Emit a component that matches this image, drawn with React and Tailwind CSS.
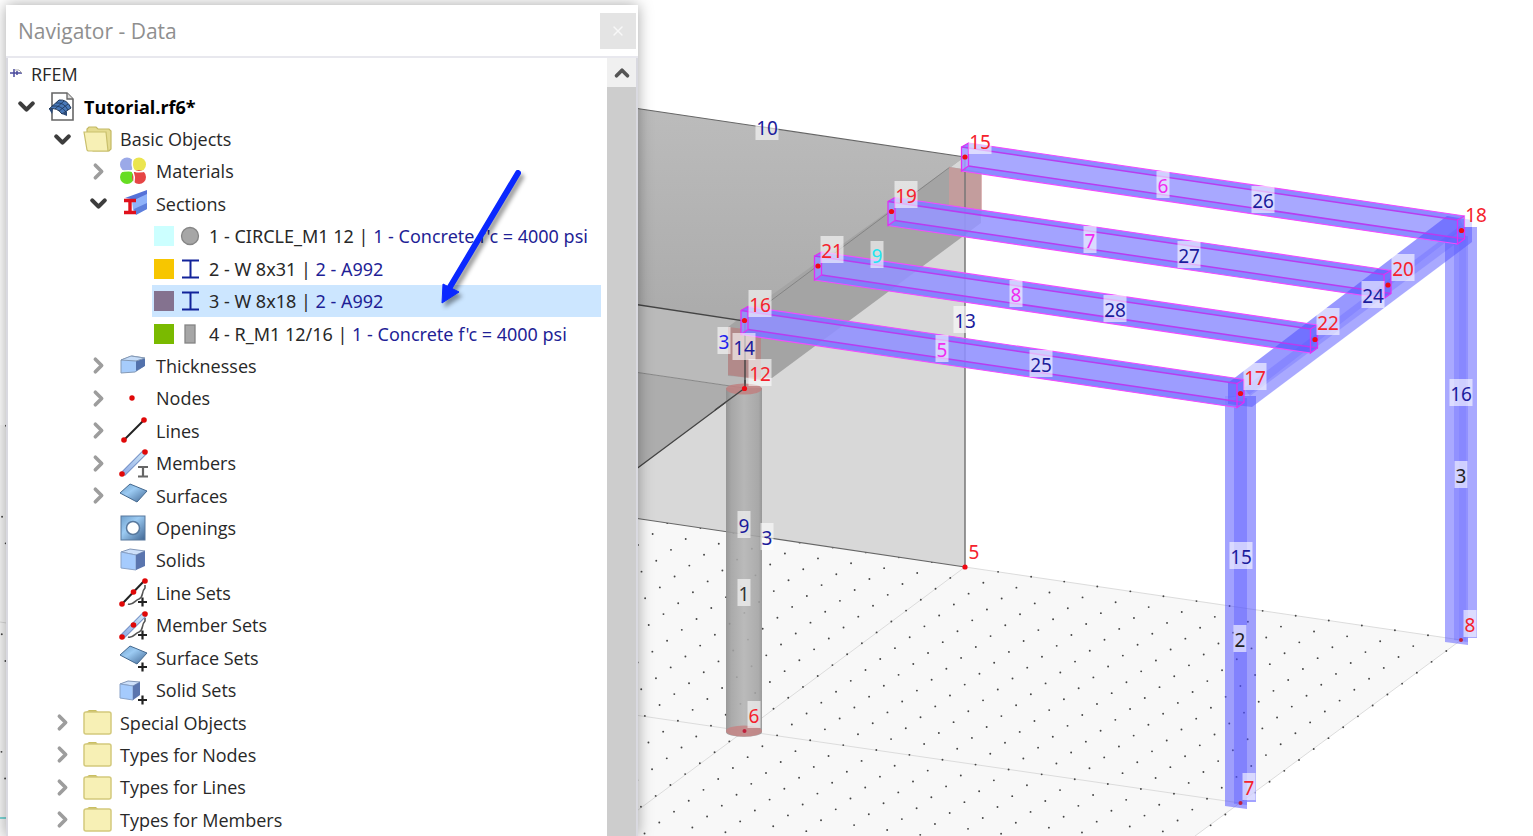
import { useState } from 'react';
import { ChevronDown, ChevronRight, ChevronUp, X } from 'lucide-react';

const treeTop = [
    { name: 'Basic Objects', level: 2, icon: 'folderOpen', open: true },
    { name: 'Materials', level: 3, icon: 'materials', open: false },
    { name: 'Sections', level: 3, icon: 'sections', open: true },
];

const sections = [
    { id: 1, name: 'CIRCLE_M1 12', material: "1 - Concrete f'c = 4000 psi", swatch: 'bg-[#ccffff]', shape: 'circle' },
    { id: 2, name: 'W 8x31', material: '2 - A992', swatch: 'bg-[#f7c600]', shape: 'beam' },
    { id: 3, name: 'W 8x18', material: '2 - A992', swatch: 'bg-[#84728f]', shape: 'beam' },
    { id: 4, name: 'R_M1 12/16', material: "1 - Concrete f'c = 4000 psi", swatch: 'bg-[#7aba00]', shape: 'rect' },
];

const treeBottom = [
    { name: 'Thicknesses', level: 3, icon: 'thickness', open: false },
    { name: 'Nodes', level: 3, icon: 'node', open: false },
    { name: 'Lines', level: 3, icon: 'line', open: false },
    { name: 'Members', level: 3, icon: 'member', open: false },
    { name: 'Surfaces', level: 3, icon: 'surface', open: false },
    { name: 'Openings', level: 3, icon: 'opening' },
    { name: 'Solids', level: 3, icon: 'solid' },
    { name: 'Line Sets', level: 3, icon: 'lineSet' },
    { name: 'Member Sets', level: 3, icon: 'memberSet' },
    { name: 'Surface Sets', level: 3, icon: 'surfaceSet' },
    { name: 'Solid Sets', level: 3, icon: 'solidSet' },
    { name: 'Special Objects', level: 2, icon: 'folder', open: false },
    { name: 'Types for Nodes', level: 2, icon: 'folder', open: false },
    { name: 'Types for Lines', level: 2, icon: 'folder', open: false },
    { name: 'Types for Members', level: 2, icon: 'folder', open: false },
];

const indent = { 1: 'pl-0', 2: 'pl-9', 3: 'pl-18' };

const plus = <path d="M19 24h9M23.5 19.5v9" stroke="#222" strokeWidth="2.2" />;
const curve = <path d="M9 26c5 2 7-4 11-5 5-2 2-7 6-11v-3" stroke="#555" strokeWidth="1.6" fill="none" />;
const surfaceShape = <path d="M1 12 11 3l17 7-10 11z" fill="url(#steel)" stroke="#44698f" strokeWidth="1" />;

const icons = {
    folder: (
        <>
            <path d="M3 6V4l3-2h7l2 2v3H3z" fill="#c9bf62" />
            <rect x="1" y="4" width="27" height="22" rx="2" fill="#f7f0b5" stroke="#d3c97c" strokeWidth="1.5" />
        </>
    ),
    folderOpen: (
        <>
            <path d="M4 7V4l2-2h7l2 2h11l2 2v18l-2 2H10z" fill="#e5dc90" stroke="#c4b964" strokeWidth="1.2" />
            <path d="M1 7h22l2 19H5L4 25z" fill="#f7f0b5" stroke="#c9bf6c" strokeWidth="1.2" />
        </>
    ),
    materials: (
        <>
            <circle cx="8" cy="7.5" r="7" fill="#9ba9e8" />
            <circle cx="20" cy="7.5" r="7" fill="#ebe54f" />
            <circle cx="8" cy="20" r="7" fill="#66dd22" />
            <circle cx="20" cy="20" r="7" fill="#e64545" />
            <path d="M14.5 0q-3 9 1 14 5 2 13-1M14 28q3-9-1-14-5-1-13 1" stroke="#fff" strokeWidth="1.5" fill="none" />
        </>
    ),
    sections: (
        <>
            <path d="M6 9 28 1v5L18 11z" fill="#5572d8" />
            <path d="M13 12 28 5v15L17 25l-3-4z" fill="#8fb2fa" />
            <path d="m15 20 13-6v6l-11 6z" fill="#5e7fdc" />
            <path d="M5 11.5h12M5 23.5h12M11 11v12" stroke="#e0101c" strokeWidth="3.4" />
        </>
    ),
    thickness: (
        <>
            <path d="M2 9 13 5l12 2v8l-9 6-14 1z" fill="#a6ccfb" stroke="#8499b5" strokeWidth="1" />
            <path d="m17 10 9-3v8l-9 5z" fill="#5372ac" />
            <path d="m2 9 10-4 14 2-9 3z" fill="#c5dcf8" stroke="#8499b5" strokeWidth="1" />
        </>
    ),
    node: <circle cx="13" cy="14" r="2.7" fill="#e00808" />,
    line: (
        <>
            <path d="M5 24 25 4" stroke="#222" strokeWidth="2" />
            <circle cx="5" cy="24" r="2.8" fill="#e00808" />
            <circle cx="25" cy="4" r="2.8" fill="#e00808" />
        </>
    ),
    member: (
        <>
            <path d="M4 25 26 3" stroke="#7793c7" strokeWidth="5.5" />
            <path d="M4 25 26 3" stroke="url(#steelLight)" strokeWidth="3.5" />
            <circle cx="3" cy="25" r="2.8" fill="#e00808" />
            <circle cx="26" cy="3" r="2.8" fill="#e00808" />
            <path d="M19 18h10M19 27.5h10M24 18v9" stroke="#666" strokeWidth="2.2" />
        </>
    ),
    surface: surfaceShape,
    opening: (
        <>
            <rect x="2" y="2" width="24" height="24" fill="url(#steel)" stroke="#58789d" strokeWidth="1" />
            <circle cx="14" cy="14" r="6.5" fill="#fff" stroke="#58789d" strokeWidth="1.5" />
        </>
    ),
    solid: (
        <>
            <path d="m2 6 9-3 15 2-9 4z" fill="#cde0fa" stroke="#8297b8" strokeWidth="1" />
            <path d="M2 6 17 9v15L2 22z" fill="#a5cbfd" stroke="#8aa3c8" strokeWidth="1" />
            <path d="m17 9 9-4v15l-9 4z" fill="#5a75ae" />
        </>
    ),
    lineSet: (
        <>
            {curve}
            <path d="M3 26 26 2" stroke="#222" strokeWidth="2" />
            <circle cx="3" cy="26" r="2.8" fill="#e00808" />
            <circle cx="14.5" cy="14" r="2.8" fill="#e00808" />
            <circle cx="26" cy="3" r="2.8" fill="#e00808" />
            {plus}
        </>
    ),
    memberSet: (
        <>
            {curve}
            <path d="M3 26 26 3" stroke="#7793c7" strokeWidth="5.5" />
            <path d="M3 26 26 3" stroke="url(#steelLight)" strokeWidth="3.5" />
            <circle cx="3" cy="26" r="2.8" fill="#e00808" />
            <circle cx="14.5" cy="14" r="2.8" fill="#e00808" />
            <circle cx="26" cy="3" r="2.8" fill="#e00808" />
            {plus}
        </>
    ),
    surfaceSet: (
        <>
            {surfaceShape}
            {plus}
        </>
    ),
    solidSet: (
        <>
            <path d="m1 8 8-3 12 1-7 4z" fill="#cde0fa" stroke="#8297b8" strokeWidth="1" />
            <path d="M1 8 14 10v14L1 22z" fill="#a5cbfd" stroke="#8aa3c8" strokeWidth="1" />
            <path d="m14 10 7-4v13l-7 5z" fill="#5a75ae" />
            {plus}
        </>
    ),
    model: (
        <>
            <path d="M5 1h15l6 6v21H5z" fill="#fff" stroke="#666" strokeWidth="1.6" />
            <path d="M20 1v6h6" fill="#ddd" stroke="#666" strokeWidth="1.3" />
            <path d="M2 17 12 8q8-1 12 8l-9 6q-5-7-13-5z" fill="#4777b8" stroke="#1d3557" strokeWidth="1" />
            <path d="M5 14q9-1 14 6M9 11q8-1 12 7M8 17l9-8M12 19l9-7" stroke="#1d3557" strokeWidth="0.8" fill="none" />
            <path d="m2 17 4 0-1 5zM15 22l5-3v5z" fill="#2b4a78" />
        </>
    ),
};

function Icon({ name }) {
    return (
        <svg viewBox="0 0 29 29" className="h-[29px] w-[29px] overflow-visible" aria-hidden="true">
            {icons[name]}
        </svg>
    );
}

function Toggle({ name, open }) {
    if (open === undefined) {
        return <span className="w-9 shrink-0" />;
    }
    return (
        <button type="button" aria-label={`Toggle ${name}`} aria-expanded={open} className="flex w-9 shrink-0 items-center justify-center">
            {open ? <ChevronDown size={25} strokeWidth={4} color="#3d3d3d" /> : <ChevronRight size={25} strokeWidth={3.5} color="#9d9d9d" />}
        </button>
    );
}

function TreeRow({ name, level, icon, open, bold }) {
    return (
        <li className={`flex items-center ${indent[level]}`}>
            <Toggle name={name} open={open} />
            <span className="flex w-[34px] shrink-0 items-center justify-center">
                <Icon name={icon} />
            </span>
            <span className={bold ? 'pl-[6px] font-bold text-black' : 'pl-[6px]'}>{name}</span>
        </li>
    );
}

function SectionShape({ shape }) {
    return (
        <svg viewBox="0 0 20 20" className="h-5 w-5" aria-hidden="true">
            {shape === 'circle' && <circle cx="10" cy="10" r="8.5" fill="#a6a6a6" stroke="#858585" strokeWidth="1.3" />}
            {shape === 'beam' && <path d="M2 1.5h17M2 18.5h17M10.5 2v16" stroke="#12239a" strokeWidth="2" />}
            {shape === 'rect' && <rect x="5" y="1" width="10" height="18" fill="#a6a6a6" stroke="#858585" strokeWidth="1.3" />}
        </svg>
    );
}

function Navigator() {
    const [selected, setSelected] = useState(3);

    return (
        <aside className="relative flex h-full w-[632px] flex-col bg-white shadow-[0_0_14px_rgba(0,0,0,0.35)]">
            <header className="flex h-[53px] shrink-0 items-center justify-between border-b-2 border-[#e8e8ee] pr-[2px] pl-3">
                <h1 className="pt-[2px] text-[21px] text-[#8f8f8f]">Navigator - Data</h1>
                <button type="button" aria-label="Close" className="flex h-9 w-9 items-center justify-center bg-[#e4e4e4]">
                    <X size={16} strokeWidth={2} color="#f8f8f8" />
                </button>
            </header>

            <div className="flex min-h-0 flex-1 border-x-2 border-[#d9d9e0]">
                <ul className="grid flex-1 auto-rows-fr pr-[6px] text-lg whitespace-nowrap text-[#282828]">
                    <li className="flex items-center gap-[7px]">
                        <svg viewBox="0 0 16 16" className="h-4 w-4" aria-hidden="true">
                            <path d="M2 7h12M6 3v8M9 5v4" stroke="#4a4a9c" strokeWidth="1.5" />
                            <path d="M7 4h4l3 3" stroke="#aaa" strokeWidth="1" fill="none" />
                        </svg>
                        <span>RFEM</span>
                    </li>
                    <TreeRow name="Tutorial.rf6*" level={1} icon="model" open bold />
                    {treeTop.map((row) => (
                        <TreeRow key={row.name} {...row} />
                    ))}
                    {sections.map((s) => (
                        <li key={s.id} className="flex pl-36">
                            <button
                                type="button"
                                onClick={() => setSelected(s.id)}
                                className={`flex flex-1 items-center pl-[2px] text-left font-['Noto_Sans',sans-serif] ${selected === s.id ? 'bg-[#cce6ff]' : ''}`}
                            >
                                <span className={`h-5 w-5 shrink-0 ${s.swatch}`} />
                                <span className="flex w-8 shrink-0 justify-center">
                                    <SectionShape shape={s.shape} />
                                </span>
                                <span className="pl-[3px]">
                                    {s.id} - {s.name} | <span className="text-[#1f1f96]">{s.material}</span>
                                </span>
                            </button>
                        </li>
                    ))}
                    {treeBottom.map((row) => (
                        <TreeRow key={row.name} {...row} />
                    ))}
                </ul>

                <div className="flex w-[29px] shrink-0 flex-col bg-[#cdcdcd]">
                    <button type="button" aria-label="Scroll up" className="flex h-[29px] items-center justify-center bg-[#f0f0f0]">
                        <ChevronUp size={22} strokeWidth={4} color="#555" />
                    </button>
                </div>
            </div>

            {/* callout arrow pointing at the selected section */}
            <svg viewBox="0 0 100 150" className="pointer-events-none absolute top-[158px] left-[424px] h-[150px] w-[100px] drop-shadow-[3px_4px_2px_rgba(0,0,0,0.4)]" aria-hidden="true">
                <path d="M88 10 20 124" stroke="#0a28ff" strokeWidth="6" strokeLinecap="round" />
                <path d="M12 140 13 121l16 8z" fill="#0a28ff" stroke="#0a28ff" strokeWidth="1" />
            </svg>
        </aside>
    );
}

// ground grid, i runs along line 5-8 and j along line 5-6
const gridDots = [];
for (let i = -30; i <= 15; i++) {
    for (let j = 0; j <= 40; j++) {
        const x = 965 + 33.07 * i - 14.73 * j;
        const y = 567 + 4.87 * i + 10.9 * j;
        if (x > 0 && y < 836) {
            gridDots.push([x, y]);
        }
    }
}

const purlins = [
    { x: 965, y: 157, fill: '#9c9cff' },
    { x: 891.5, y: 211.5, fill: '#9696ff' },
    { x: 818, y: 266, fill: '#9393ff' },
    { x: 744.5, y: 320.5, fill: '#9090ff' },
];

const red = '#f5222d';
const navy = '#1c1c9c';
const pink = '#f02cf0';

const labels = [
    ['10', 767, 128, navy],
    ['15', 980, 142, red],
    ['19', 906, 196, red],
    ['21', 832, 251, red],
    ['16', 760, 305, red],
    ['9', 877, 256, '#22e6f2'],
    ['3', 724, 342, '#2222ee'],
    ['14', 744, 348, navy],
    ['12', 760, 374, red],
    ['13', 965, 321, navy],
    ['6', 1163, 186, pink],
    ['7', 1090, 241, pink],
    ['8', 1016, 295, pink],
    ['5', 942, 350, pink],
    ['26', 1263, 201, navy],
    ['27', 1189, 256, navy],
    ['28', 1115, 310, navy],
    ['25', 1041, 365, navy],
    ['18', 1476, 215, red],
    ['20', 1403, 269, red],
    ['24', 1373, 296, navy],
    ['22', 1328, 323, red],
    ['17', 1255, 378, red],
    ['16', 1461, 394, navy],
    ['3', 1461, 476, '#222'],
    ['15', 1241, 557, navy],
    ['2', 1240, 640, '#222'],
    ['9', 744, 526, navy],
    ['3', 767, 538, navy],
    ['1', 744, 594, '#333'],
    ['5', 974, 552, red],
    ['6', 754, 716, red],
    ['7', 1249, 788, red],
    ['8', 1470, 625, red],
];

const nodes = [
    [965, 157], [891.5, 211.5], [818, 266], [744.5, 320.5], [744.5, 388.5],
    [1461.5, 230.5], [1388, 285], [1315, 339.5], [1240.5, 393.5], [965, 567],
];

const supports = [[744.5, 731], [1240.5, 803], [1461, 640]];

function PurlinLines({ x, y }) {
    return (
        <g transform={`translate(${x} ${y})`} fill="none">
            <path d="M-3.5-10 492.5 63M3.5 9 499.5 82" stroke="#b83cf0" strokeWidth="1.5" />
            <path d="M3.5-14 499.5 59M-3.5 14 492.5 87" stroke="#f04cff" strokeWidth="1.2" />
            <path d="M-3.5-10 3.5-14V9L-3.5 14zM492.5 63l7-4v23l-7 5z" stroke="#e030f4" strokeWidth="1.3" />
        </g>
    );
}

function ModelView() {
    return (
        <svg viewBox="0 0 1533 836" preserveAspectRatio="xMinYMin slice" className="absolute inset-0 h-full w-full font-['Noto_Sans',sans-serif]" role="img" aria-label="Structural model">
            <defs>
                <linearGradient id="steel" x1="0" y1="0" x2="1" y2="1">
                    <stop offset="0" stopColor="#6fa0cc" />
                    <stop offset="0.4" stopColor="#9ccbf3" />
                    <stop offset="1" stopColor="#3f6592" />
                </linearGradient>
                <linearGradient id="steelLight" gradientUnits="userSpaceOnUse" x1="3" y1="26" x2="26" y2="3">
                    <stop offset="0" stopColor="#8ea9e6" />
                    <stop offset="1" stopColor="#cfe8f6" />
                </linearGradient>
                <linearGradient id="slab" x1="0" y1="0" x2="0" y2="1">
                    <stop offset="0" stopColor="#bcbcbc" />
                    <stop offset="1" stopColor="#ababab" />
                </linearGradient>
                <linearGradient id="pipe" x1="0" y1="0" x2="1" y2="0">
                    <stop offset="0" stopColor="#8c8c8c" />
                    <stop offset="0.15" stopColor="#a0a0a0" />
                    <stop offset="0.5" stopColor="#b2b2b2" />
                    <stop offset="0.9" stopColor="#a2a2a2" />
                    <stop offset="1" stopColor="#8e8e8e" />
                </linearGradient>
            </defs>

            {/* ground */}
            <path d="M0 425 965 567 1461 640 1195 836H0z" fill="#f8f8f8" />
            <path d="M965 567 1461 640 1195 836M965 567 603 836M0 622 744 731 1240 803" stroke="#dcdcdc" strokeWidth="1" fill="none" />
            {gridDots.map(([x, y], k) => (
                <circle key={k} cx={x} cy={y} r="0.95" fill="#444" />
            ))}
            <path d="M0 818h8" stroke="#5cc" strokeWidth="1.5" />

            {/* walls and slab */}
            <path d="M600 461 744 388 745 321 965 157V567L600 513z" fill="#d8d8d8" />
            <path d="M600 103 965 157 745 321 600 299z" fill="url(#slab)" />
            <path d="M600 299 745 321V388L600 367z" fill="#bababa" />
            <path d="M600 367 744 388 600 496z" fill="#adadad" />

            {/* concrete beam 9 */}
            <path d="M728 327 744 315 950 167 981 172V223L772 378 728 376z" fill="#a4a4a4" />
            <path d="M745 320 950 167" stroke="#777" strokeWidth="1" opacity="0.7" />
            <path d="M949 167 982 172V214L949 209z" fill="#d09a9a" opacity="0.7" />
            <path d="M728 327 761 331V380L728 375z" fill="#b87f7f" opacity="0.7" />
            <path d="M965 157V567" stroke="#777" strokeWidth="1.5" />
            <path d="M600 103 965 157M600 513 965 567" stroke="#666" strokeWidth="1.2" />
            <path d="M600 299 745 321V388L600 496" stroke="#444" strokeWidth="1.4" fill="none" />
            <path d="M600 367 744 388" stroke="#888" strokeWidth="1" />

            {/* concrete column 1 */}
            <path d="M726 388V732a18 5 0 0 0 36 0V388z" fill="url(#pipe)" opacity="0.88" />
            <ellipse cx="744" cy="389" rx="18" ry="5.5" fill="#c08080" opacity="0.85" />
            <ellipse cx="744" cy="731" rx="18" ry="5.5" fill="#c48484" opacity="0.85" />
            <path d="M745 380V388L715 410" stroke="#444" strokeWidth="1.4" fill="none" />

            {/* steel columns */}
            <g fill="#4c4cff">
                <path d="M1225 396H1256V802H1247V809L1225 806z" opacity="0.52" />
                <path d="M1234 398H1247V805L1234 804z" opacity="0.34" />
                <path d="M1445 240 1463 227H1477V638H1468V645L1445 642z" opacity="0.48" />
                <path d="M1454 236H1468V642L1454 640z" opacity="0.26" />
                <path d="M1459 236H1466V642L1459 640z" opacity="0.12" />
            </g>

            {/* purlins and edge beam */}
            {purlins.map((p) => (
                <g key={p.y} transform={`translate(${p.x} ${p.y})`}>
                    <path d="M-3.5-10 3.5-14 499.5 59V82L492.5 87-3.5 14z" fill={p.fill} opacity="0.88" />
                    <path d="M-3.5-10 3.5-14 499.5 59 492.5 63zM-3.5 14 3.5 9 499.5 82 492.5 87z" fill="#5a5aff" opacity="0.35" />
                </g>
            ))}
            <g fill="#5454ff">
                <path d="M1228 383 1447 216 1472 220V242L1252 407 1228 404z" opacity="0.5" />
                <path d="M1228 383 1447 216 1460 219 1464 228 1250 394 1228 398z" opacity="0.2" />
                <path d="M1244 388 1460 226 1466 236 1250 396z" opacity="0.25" />
            </g>
            {purlins.map((p) => (
                <PurlinLines key={p.y} x={p.x} y={p.y} />
            ))}

            {labels.map(([text, x, y, color]) => {
                const w = text.length > 1 ? 23 : 13;
                return (
                    <g key={`${text}-${x}`}>
                        <rect x={x - w / 2} y={y - 15} width={w} height="27" fill="#fff" opacity="0.6" />
                        <text x={x} y={y + 7} textAnchor="middle" fontSize="19" fill={color}>
                            {text}
                        </text>
                    </g>
                );
            })}
            {nodes.map(([x, y]) => (
                <circle key={`${x}-${y}`} cx={x} cy={y} r="2.6" fill="#f00a14" />
            ))}
            {supports.map(([x, y]) => (
                <circle key={`${x}-${y}`} cx={x} cy={y} r="2" fill="#c0203c" />
            ))}
        </svg>
    );
}

export default function App() {
    return (
        <main className="relative h-screen overflow-hidden bg-white pt-[5px] pl-[6px] font-['Open_Sans','Noto_Sans',sans-serif]">
            <ModelView />
            <Navigator />
        </main>
    );
}
